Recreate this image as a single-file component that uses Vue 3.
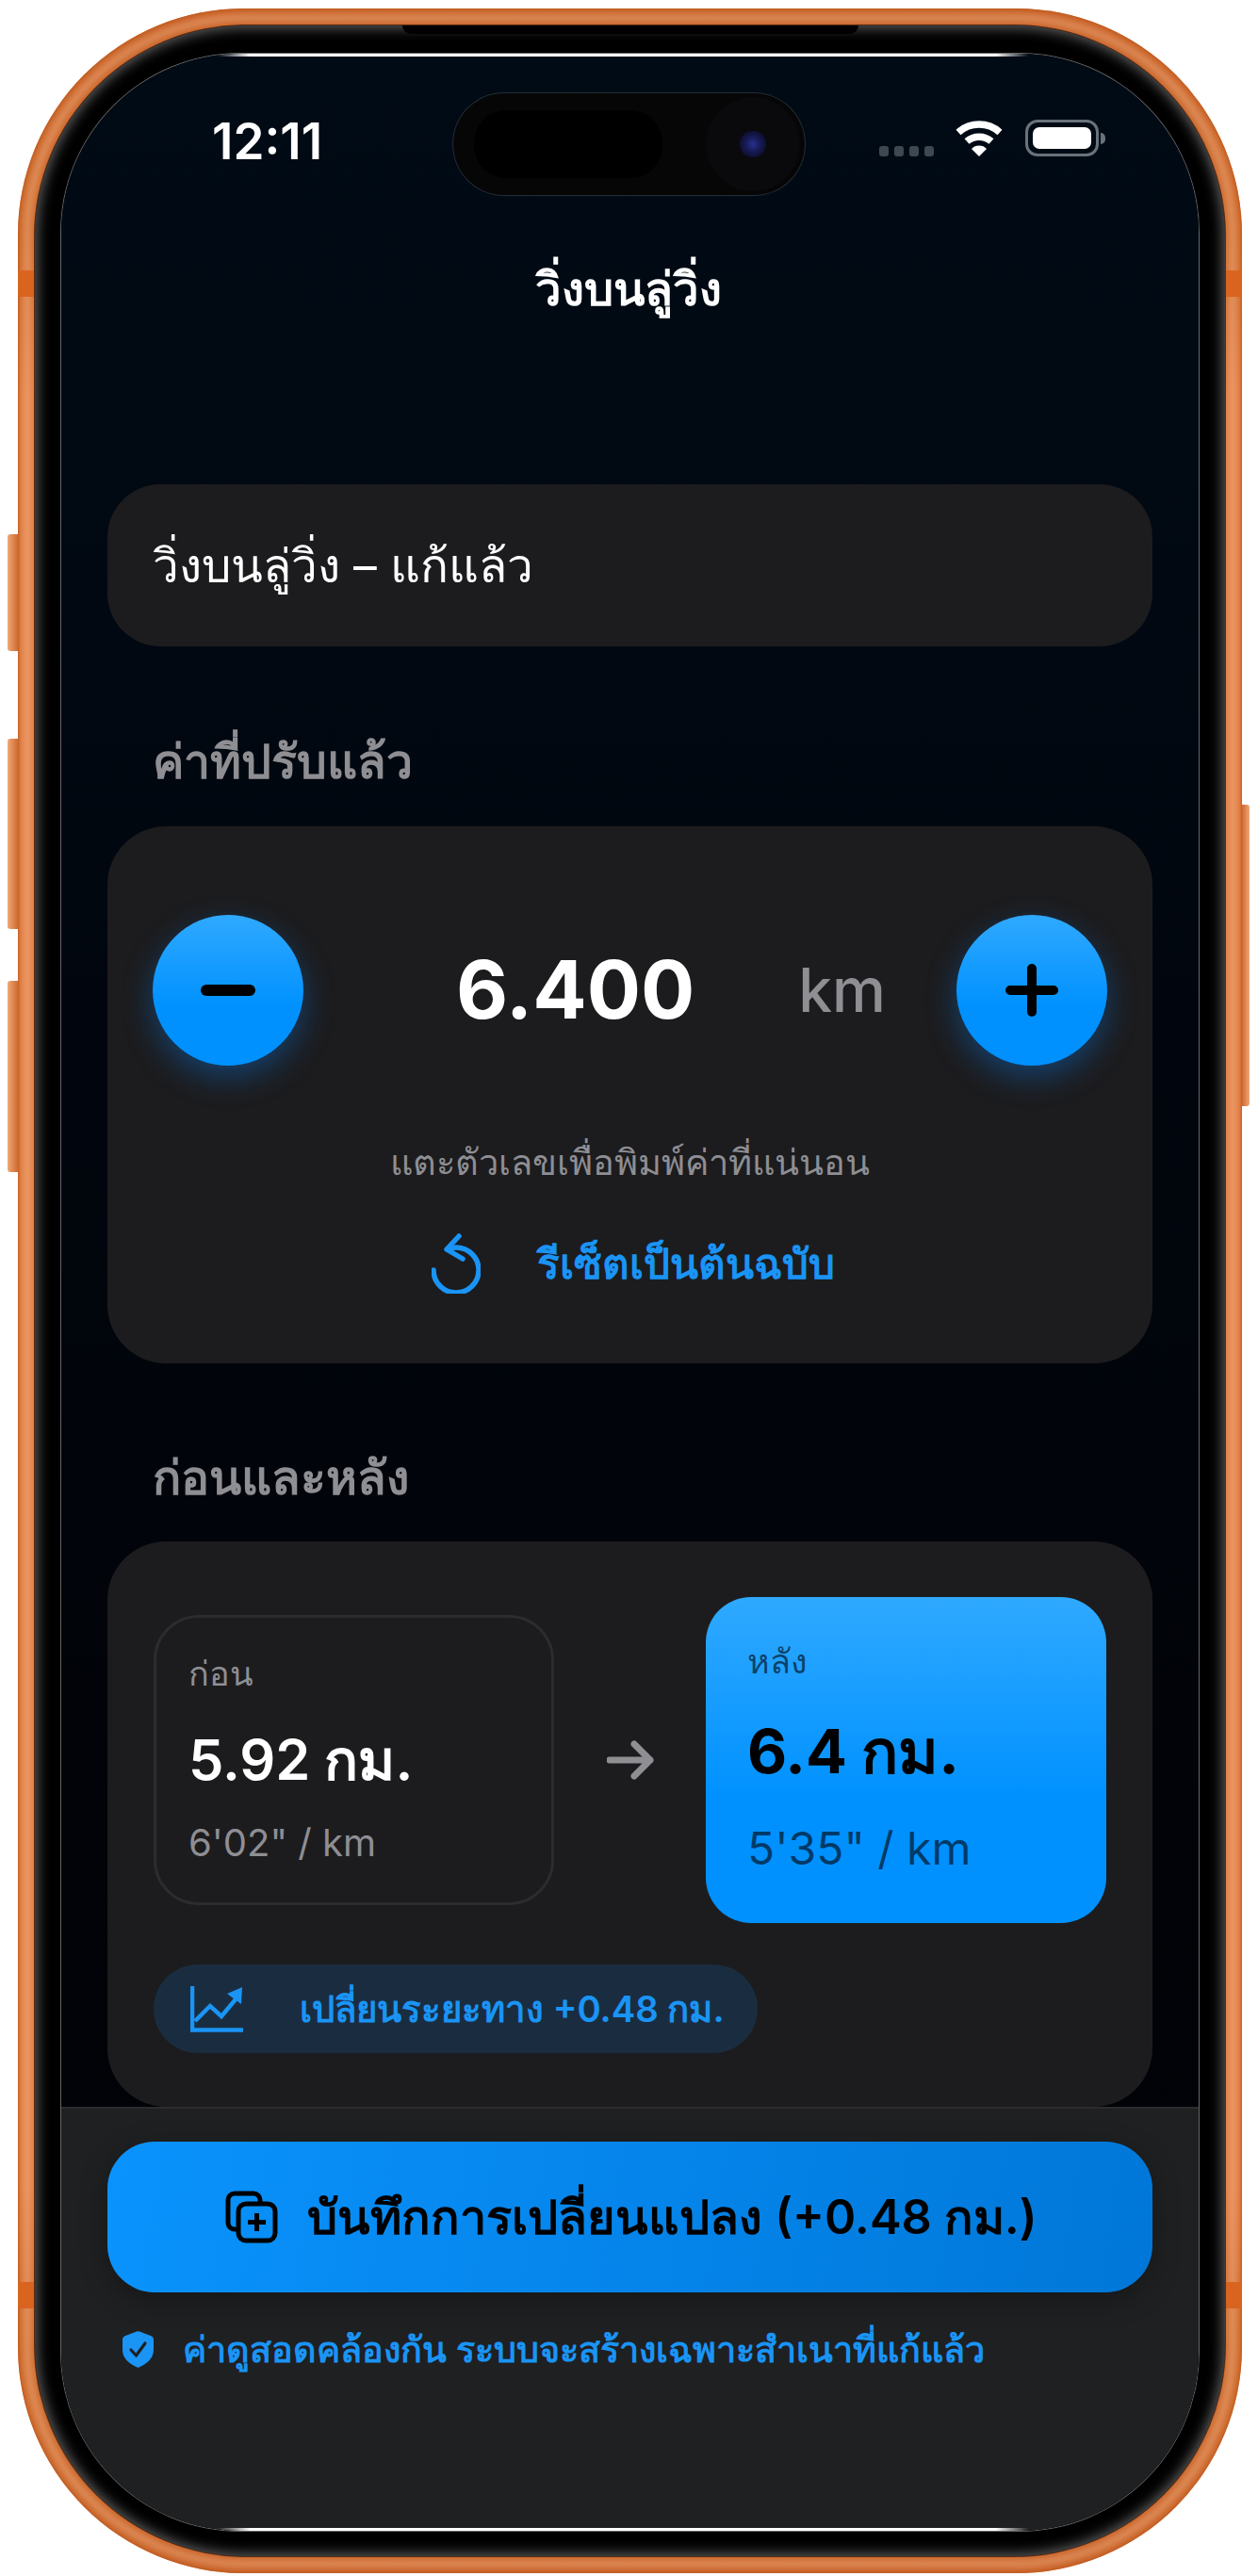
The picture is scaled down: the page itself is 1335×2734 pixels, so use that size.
<template>
  <div class="page">
    <div class="phone">
      <span class="side-btn left-a"></span>
      <span class="side-btn left-b"></span>
      <span class="side-btn left-c"></span>
      <span class="side-btn right-a"></span>
      <span class="band band-tl"></span>
      <span class="band band-tr"></span>
      <span class="band band-bl"></span>
      <span class="band band-br"></span>

      <div class="bezel">
        <span class="notch"></span>
        <div class="screen">
          <span class="edge edge-top"></span>
          <span class="edge edge-bottom"></span>

          <div class="status-bar">
            <span class="time">12:11</span>
            <div class="island">
              <span class="island-pill"></span>
              <span class="island-cam"><i></i></span>
            </div>
            <div class="status-icons">
              <div class="signal"><i></i><i></i><i></i><i></i></div>
              <svg class="wifi" viewBox="0 0 52 39" width="52" height="39">
                <path d="M4 13.5A33 33 0 0 1 48 13.5" fill="none" stroke="#fff" stroke-width="7.5" />
                <path d="M13 23A20 20 0 0 1 39 23" fill="none" stroke="#fff" stroke-width="7.5" />
                <path d="M18 31A11 11 0 0 1 34 31L26 39Z" fill="#fff" />
              </svg>
              <div class="battery"><span></span></div>
              <i class="battery-nub"></i>
            </div>
          </div>

          <h1 class="nav-title">วิ่งบนลู่วิ่ง</h1>

          <div class="name-card">วิ่งบนลู่วิ่ง – แก้แล้ว</div>

          <div class="section-label first">ค่าที่ปรับแล้ว</div>
          <div class="card adjust-card">
            <div class="stepper">
              <button class="round-btn">
                <svg viewBox="0 0 58 58" width="58" height="58"><path d="M6 29H52" stroke="#000" stroke-width="12" stroke-linecap="round" /></svg>
              </button>
              <div class="readout">
                <span class="value">6.400</span>
                <span class="unit">km</span>
              </div>
              <button class="round-btn">
                <svg viewBox="0 0 58 58" width="58" height="58"><path d="M6 29H52M29 6V52" stroke="#000" stroke-width="10" stroke-linecap="round" /></svg>
              </button>
            </div>
            <div class="hint">แตะตัวเลขเพื่อพิมพ์ค่าที่แน่นอน</div>
            <div class="reset">
              <svg viewBox="0 0 52 64" width="52" height="64" fill="none" stroke="#1a94f5" stroke-width="5.5" stroke-linecap="round" stroke-linejoin="round">
                <path d="M17 17C20 15.500 23 15 26 15A24 24 0 1 1 2 39" />
                <path d="M29 3L16 17L33 27" />
              </svg>
              <span>รีเซ็ตเป็นต้นฉบับ</span>
            </div>
          </div>

          <div class="section-label second">ก่อนและหลัง</div>
          <div class="card compare-card">
            <div class="compare-row">
              <div class="box before">
                <div class="box-label">ก่อน</div>
                <div class="box-value">5.92 กม.</div>
                <div class="box-pace">6'02" / km</div>
              </div>
              <svg class="arrow" viewBox="0 0 50 42" width="50" height="42" fill="none" stroke="#8e8e93" stroke-width="7" stroke-linecap="round" stroke-linejoin="round">
                <path d="M3 21H46M29 4L46 21L29 38" />
              </svg>
              <div class="box after">
                <div class="box-label">หลัง</div>
                <div class="box-value">6.4 กม.</div>
                <div class="box-pace">5'35" / km</div>
              </div>
            </div>
            <div class="delta-pill">
              <svg viewBox="0 0 56 50" width="56" height="50" fill="none" stroke="#1a94f5" stroke-width="4.5">
                <path d="M2 1V47.5H56" />
                <path d="M5 38L21 22L33 33L48 15" />
                <path d="M39 9L55 2L54 20Z" fill="#1a94f5" stroke="none" />
              </svg>
              <span>เปลี่ยนระยะทาง +0.48 กม.</span>
            </div>
          </div>

          <div class="footer">
            <button class="save-btn">
              <svg viewBox="0 0 56 56" width="56" height="56" fill="none" stroke="#000" stroke-width="5">
                <path d="M13 41H10A7 7 0 0 1 3 34V10A7 7 0 0 1 10 3H30A7 7 0 0 1 37 10V14" />
                <rect x="14" y="14" width="39" height="39" rx="8" />
                <path d="M33.500 24V43M24 33.500H43" />
              </svg>
              <span>บันทึกการเปลี่ยนแปลง (+0.48 กม.)</span>
            </button>
            <div class="note">
              <svg viewBox="0 0 33 39" width="33" height="39">
                <path d="M15 0.600Q16.500 0 18 0.600L30.500 5.200Q33 6.200 33 8.800V20C33 29 26 34.500 17.500 38.600Q16.500 39 15.500 38.600C7 34.500 0 29 0 20V8.800Q0 6.200 2.500 5.200Z" fill="#1a94f5" />
                <path d="M9 20L14.500 26L24 13" fill="none" stroke="#1f2021" stroke-width="3.200" stroke-linecap="round" stroke-linejoin="round" />
              </svg>
              <span>ค่าดูสอดคล้องกัน ระบบจะสร้างเฉพาะสำเนาที่แก้แล้ว</span>
            </div>
          </div>
        </div>
      </div>
    </div>
  </div>
</template>

<script setup>
</script>

<style>
html, body { margin: 0; background: #fff; }
</style>

<style scoped>
.page {
  width: 1335px;
  height: 2734px;
  padding: 9px 0 0 19px;
  box-sizing: border-box;
  background: #fff;
  font-family: Inter, "Noto Sans", sans-serif;
  overflow: hidden;
}

.phone {
  position: relative;
  width: 1299px;
  height: 2722px;
  padding: 18px;
  box-sizing: border-box;
  border-radius: 240px;
  background: linear-gradient(180deg, #c9642a 0, #cf6c2e 9%, #e07c42 15%, #e07c42 85%, #cf6c2e 91%, #c9642a 100%);
  box-shadow: inset 0 0 3px 1px #bd581c;
}
/* metal highlight running round the frame */
.phone::before {
  content: "";
  position: absolute;
  inset: 6px;
  border: 8px solid rgba(255, 205, 170, 0.36);
  border-radius: 234px;
  filter: blur(3px);
}

.side-btn {
  position: absolute;
  width: 11px;
  background: linear-gradient(90deg, #f0a878, #cf6a30);
  border-radius: 3px 0 0 3px;
  left: -11px;
}
.left-a { top: 558px; height: 124px; }
.left-b { top: 775px; height: 202px; }
.left-c { top: 1032px; height: 203px; }
.right-a {
  left: auto;
  right: -8px;
  width: 8px;
  top: 845px;
  height: 320px;
  border-radius: 0 3px 3px 0;
  background: linear-gradient(90deg, #cf6a30, #f0a878);
}

.band {
  position: absolute;
  width: 18px;
  height: 28px;
  background: #d9641f;
}
.band-tl { left: 0; top: 278px; }
.band-tr { right: 0; top: 278px; }
.band-bl { left: 0; top: 2413px; }
.band-br { right: 0; top: 2413px; }

.bezel {
  position: relative;
  height: 100%;
  padding: 30px 28px 27px;
  box-sizing: border-box;
  border-radius: 224px;
  background: #000;
  box-shadow: 0 0 0 1px #5a2c12, inset 0 0 13px 3px rgba(165, 165, 165, 0.55);
}

.notch {
  position: absolute;
  left: 390px;
  top: 0;
  width: 484px;
  height: 9px;
  background: #000;
  border-radius: 0 0 14px 14px;
}

.screen {
  position: relative;
  display: flex;
  flex-direction: column;
  height: 100%;
  border-radius: 190px;
  overflow: hidden;
  background: linear-gradient(180deg, #010b15 0, #01060e 40%, #010308 70%, #010206 100%);
  box-shadow: 0 0 0 1px rgba(255, 255, 255, 0.4);
  color: #fff;
}

.edge {
  position: absolute;
  left: 165px;
  right: 180px;
  height: 3px;
  background: linear-gradient(90deg, transparent 0, #fff 36px, #fff calc(100% - 36px), transparent 100%);
  z-index: 2;
}
.edge-top { top: 0; }
.edge-bottom { bottom: 0; }

.status-bar {
  position: relative;
  height: 150px;
  flex: none;
}

.time {
  position: absolute;
  left: 160px;
  top: 63px;
  font-size: 53px;
  line-height: 60px;
  font-weight: 600;
}

.island {
  position: absolute;
  left: 416px;
  top: 42px;
  width: 373px;
  height: 108px;
  box-sizing: border-box;
  border-radius: 54px;
  background: #060606;
  box-shadow: 0 0 0 1px rgba(255, 255, 255, 0.14);
}
.island-pill {
  position: absolute;
  left: 22px;
  top: 18px;
  width: 200px;
  height: 72px;
  border-radius: 34px;
  background: #000;
}
.island-cam {
  position: absolute;
  left: 268px;
  top: 4px;
  width: 100px;
  height: 100px;
  border-radius: 50%;
  background: #0a0a0c;
}
.island-cam i {
  position: absolute;
  left: 36px;
  top: 36px;
  width: 28px;
  height: 28px;
  border-radius: 50%;
  background: radial-gradient(circle, #27308f 0, #15184d 45%, #06071a 100%);
}

.status-icons {
  position: absolute;
  left: 868px;
  top: 70px;
  display: flex;
  align-items: flex-start;
}
.signal {
  display: flex;
  gap: 6px;
  margin-top: 28px;
  margin-right: 22px;
}
.signal i {
  width: 10px;
  height: 11px;
  border-radius: 3px;
  background: #3d4850;
}
.battery {
  width: 78px;
  height: 39px;
  margin-left: 23px;
  padding: 5px;
  box-sizing: border-box;
  border: 3px solid #69727a;
  border-radius: 13px;
}
.battery span {
  display: block;
  height: 100%;
  border-radius: 7px;
  background: #fff;
}
.battery-nub {
  width: 5px;
  height: 12px;
  margin: 14px 0 0 2px;
  border-radius: 0 6px 6px 0;
  background: #69727a;
}

.nav-title {
  margin: 62px 0 0;
  padding-right: 3px;
  text-align: center;
  font-size: 49px;
  line-height: 76px;
  font-weight: 600;
}

.name-card {
  margin: 169px 49px 0;
  height: 172px;
  padding-left: 48px;
  display: flex;
  align-items: center;
  border-radius: 56px;
  background: #1c1c1e;
  font-size: 49.5px;
}

.section-label {
  margin-left: 97px;
  font-size: 50px;
  line-height: 60px;
  font-weight: 600;
  color: #8e8e93;
}
.section-label.first { margin-top: 92px; }
.section-label.second { margin-top: 91px; }

.card {
  margin: 0 49px;
  border-radius: 62px;
  background: #1c1c1e;
  box-sizing: border-box;
}

.adjust-card {
  margin-top: 39px;
  height: 570px;
  padding: 94px 48px 0;
}

.stepper {
  display: flex;
  align-items: center;
  justify-content: space-between;
}

.round-btn {
  display: flex;
  align-items: center;
  justify-content: center;
  width: 160px;
  height: 160px;
  padding: 0;
  border: none;
  border-radius: 50%;
  background: linear-gradient(180deg, #2fa9ff 0, #0091ff 62%);
  box-shadow: 0 12px 32px rgba(10, 132, 255, 0.35);
}

.readout {
  flex: 1;
  display: flex;
  justify-content: center;
  align-items: center;
  gap: 110px;
  padding-left: 87px;
}
.value {
  font-size: 85px;
  font-weight: 700;
  line-height: 110px;
}
.unit {
  font-size: 64px;
  line-height: 110px;
  font-weight: 500;
  color: #8e8e93;
}

.hint {
  margin-top: 72px;
  text-align: center;
  font-size: 38px;
  line-height: 60px;
  color: #8e8e93;
}

.reset {
  margin-top: 43px;
  padding-left: 7px;
  display: flex;
  align-items: center;
  justify-content: center;
  gap: 60px;
  font-size: 44px;
  font-weight: 600;
  color: #1a94f5;
}

.compare-card {
  margin-top: 38px;
  height: 600px;
  padding: 59px 49px 0;
}

.compare-row {
  display: flex;
  align-items: center;
  justify-content: space-between;
}

.box {
  width: 425px;
  box-sizing: border-box;
  border-radius: 48px;
}
.before {
  height: 308px;
  padding: 35px 34px 0;
  border: 3px solid #2c2c2e;
}
.after {
  height: 346px;
  padding: 44px 44px 0;
  background: linear-gradient(180deg, #2fa9ff 0, #0091ff 62%);
  color: #000;
}
.box-label {
  font-size: 36px;
  line-height: 48px;
  font-weight: 500;
  color: #8e8e93;
}
.box-value {
  margin-top: 29px;
  font-size: 59.5px;
  line-height: 76px;
  font-weight: 600;
}
.box-pace {
  margin-top: 25px;
  font-size: 40px;
  line-height: 52px;
  color: #8e8e93;
}
.after .box-label,
.after .box-pace {
  color: rgba(0, 0, 0, 0.6);
}
.after .box-value {
  margin-top: 34px;
  font-size: 65px;
  font-weight: 700;
}
.after .box-pace {
  margin-top: 39px;
  font-size: 48px;
}

.delta-pill {
  display: inline-flex;
  align-items: center;
  gap: 60px;
  height: 94px;
  margin-top: 44px;
  padding: 0 35px 0 39px;
  border-radius: 47px;
  background: #1a2d40;
  font-size: 38.3px;
  font-weight: 600;
  color: #1a94f5;
}

.footer {
  flex: 1;
  padding: 35px 49px 0;
  border-top: 2px solid #2c2c2e;
  background: #1f2021;
}

.save-btn {
  display: flex;
  align-items: center;
  justify-content: center;
  gap: 31px;
  width: 100%;
  height: 160px;
  padding: 0 0 0 3px;
  border: none;
  border-radius: 50px;
  background: linear-gradient(100deg, #0a93fd, #0077d8);
  box-shadow: 0 8px 30px rgba(0, 0, 0, 0.3);
  font-family: inherit;
  font-size: 50.5px;
  font-weight: 600;
  color: #000;
}

.note {
  display: flex;
  align-items: center;
  gap: 31px;
  margin-top: 35px;
  padding-left: 16px;
  font-size: 37.75px;
  line-height: 50px;
  font-weight: 600;
  color: #1a94f5;
}
</style>
